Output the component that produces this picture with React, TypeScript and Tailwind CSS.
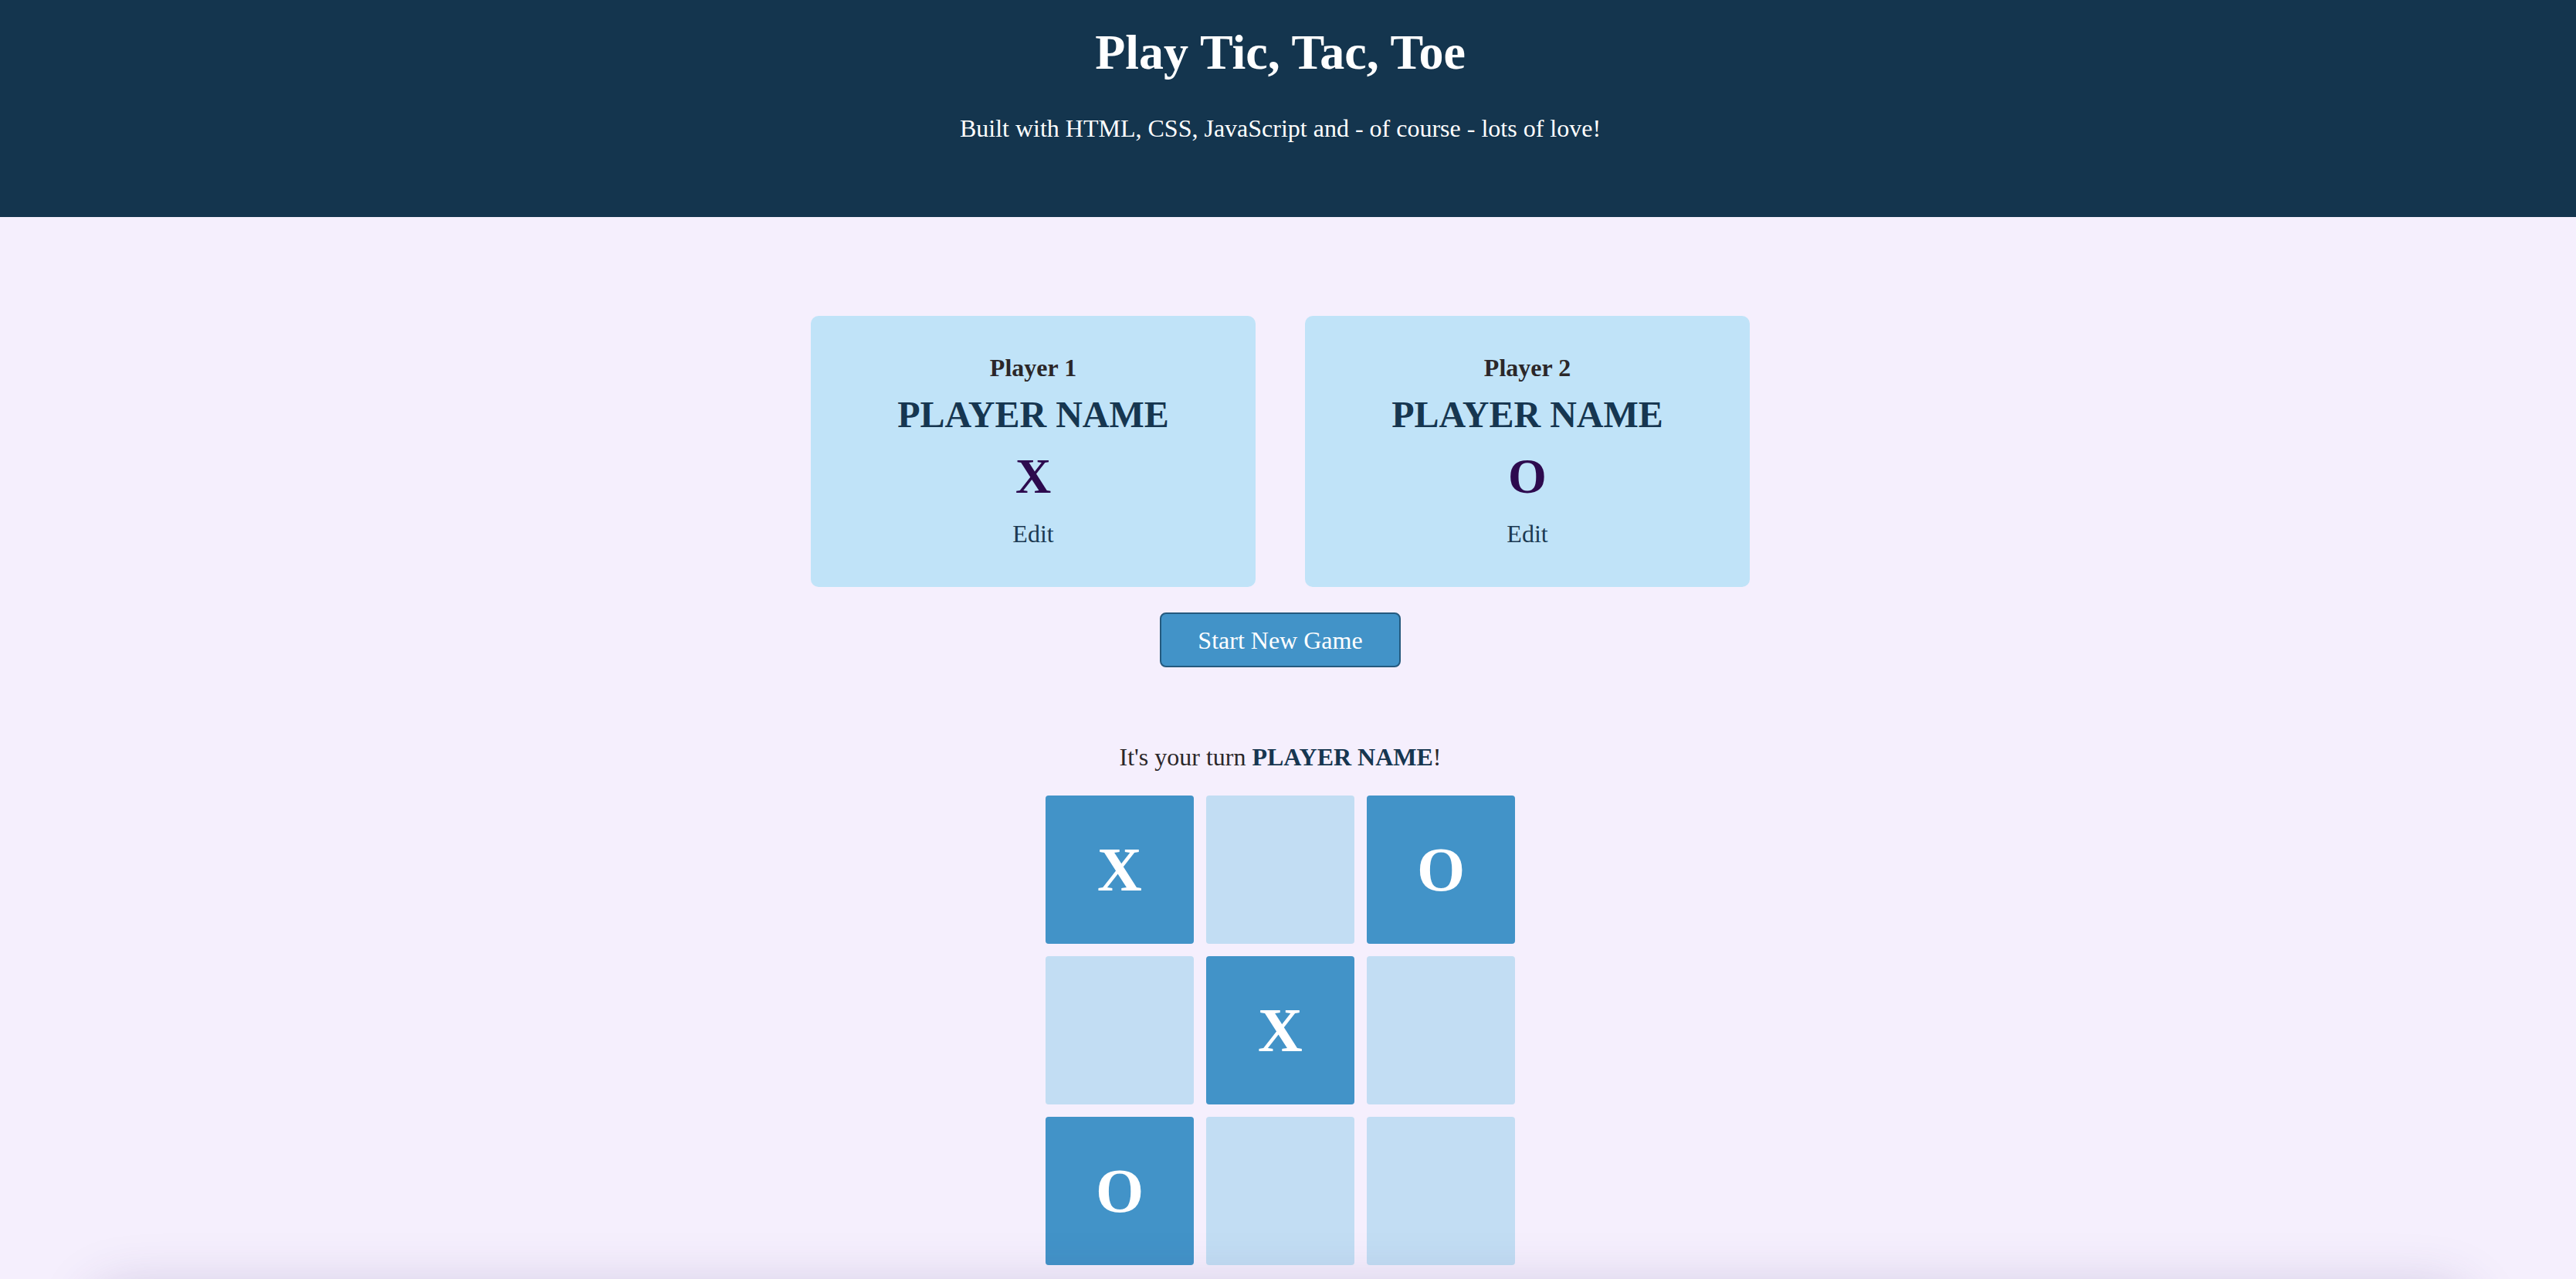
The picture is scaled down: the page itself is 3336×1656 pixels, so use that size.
const board: ("X" | "O" | "")[] = ["X", "", "O", "", "X", "", "O", "", ""];

const players = [
  { label: "Player 1", name: "PLAYER NAME", symbol: "X" },
  { label: "Player 2", name: "PLAYER NAME", symbol: "O" },
];

function PlayerCard({ label, name, symbol }: { label: string; name: string; symbol: string }) {
  return (
    <li className="flex w-[576px] flex-col items-center rounded-[10px] bg-[#c0e3f8] pb-[53px] pt-[51px]">
      <h3 className="text-[32px] font-bold leading-none text-[#2b2729]">{label}</h3>
      <p className="mt-[21px] text-[48px] font-bold leading-none text-[#163650]">{name}</p>
      <p className="mt-[24px] text-[64px] font-bold leading-none text-[#2d0a4e]">{symbol}</p>
      <button className="mt-[26px] text-[32px] leading-none text-[#1b3a52]">Edit</button>
    </li>
  );
}

export default function App() {
  return (
    <div className="min-h-screen bg-[#f5effd] font-['Liberation_Serif','Times_New_Roman',serif]">
      <header className="h-[281px] bg-[#14354e] pr-[20px] pt-[36px] text-center text-white">
        <h1 className="text-[64px] font-bold leading-none">Play Tic, Tac, Toe</h1>
        <p className="mt-[50px] text-[32px] leading-none">
          Built with HTML, CSS, JavaScript and - of course - lots of love!
        </p>
      </header>

      <main className="flex flex-col items-center pr-[20px] pt-[128px]">
        <ol className="flex gap-[64px]">
          {players.map((p) => (
            <PlayerCard key={p.label} {...p} />
          ))}
        </ol>

        <button className="mt-[33px] h-[71px] w-[312px] rounded-[8px] border-2 border-[#255a7e] bg-[#4293c8] text-[32px] leading-none text-white">
          Start New Game
        </button>

        <p className="mt-[100px] text-[32px] leading-none text-[#2b2729]">
          It's your turn <span className="font-bold text-[#163650]">PLAYER NAME</span>!
        </p>

        <ol className="mt-[34px] grid grid-cols-[repeat(3,192px)] grid-rows-[repeat(3,192px)] gap-[16px]">
          {board.map((cell, i) => (
            <li
              key={i}
              className={[
                "flex items-center justify-center rounded-[4px] text-[80px] font-bold leading-none text-white",
                cell ? "bg-[#4293c8]" : "bg-[#c2ddf3]",
              ].join(" ")}
            >
              {cell}
            </li>
          ))}
        </ol>

        <section className="mt-[30px] h-[240px] w-[3080px] rounded-[40px] bg-[#f5effd] shadow-[0_0_70px_rgba(70,50,120,0.22)]" />
      </main>
    </div>
  );
}
